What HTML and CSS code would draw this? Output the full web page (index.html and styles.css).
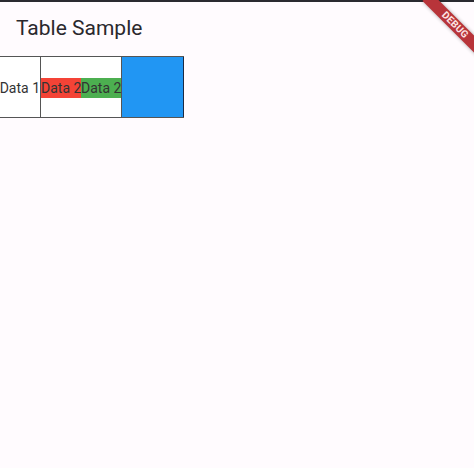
FILE: index.html
```html
<!DOCTYPE html>
<html>
<head>
<meta charset="utf-8">
<link rel="stylesheet" href="styles.css">
</head>
<body>
<div class="topbar"></div>
<header class="appbar"><h1 class="title">Table Sample</h1></header>
<div class="table">
  <div class="cell c1"><span class="txt">Data 1</span></div>
  <div class="cell c2"><span class="txt red">Data 2</span><span class="txt green">Data 2</span></div>
  <div class="cell c3"></div>
</div>
<div class="banner">DEBUG</div>
</body>
</html>
```
FILE: styles.css
```css
html, body { margin: 0; padding: 0; }
body {
  width: 474px; height: 468px; overflow: hidden; position: relative;
  background: #fffbfe;
  font-family: Roboto, "Noto Sans", sans-serif;
  color: #2a282d;
}
.topbar { height: 2px; background: #2a2a30; }
.appbar { height: 54px; display: flex; align-items: center; padding-left: 16px; box-sizing: border-box; }
.title { margin: 0; font-size: 21px; font-weight: 400; line-height: 28px; position: relative; top: -1px; color: #2a282d; }
.table { display: flex; height: 62px; box-sizing: border-box; border-top: 1px solid #555; border-bottom: 1px solid #555; width: 184px; }
.cell { display: flex; align-items: center; box-sizing: border-box; border-right: 1px solid #555; }
.c1 { width: 41px; justify-content: flex-end; background: #fff; }
.c2 { width: 81px; background: #fff; }
.c3 { width: 62px; background: #2196f3; border-right-color: #1b2a44; }
.txt { font-size: 14px; line-height: 20px; white-space: nowrap; display: block; position: relative; top: 1px; color: #333; }
.red { background: #f44336; width: 40px; }
.green { background: #4caf50; width: 40px; }
.banner {
  position: absolute; left: 415px; top: 19px; width: 80px; height: 12px;
  transform: rotate(45deg);
  background: #b8343a; color: #fde4e4;
  font-size: 10px; font-weight: 700; line-height: 12px; text-align: center;
  letter-spacing: 0.2px;
  box-shadow: 0 0 4px rgba(0,0,0,0.35);
}
```
